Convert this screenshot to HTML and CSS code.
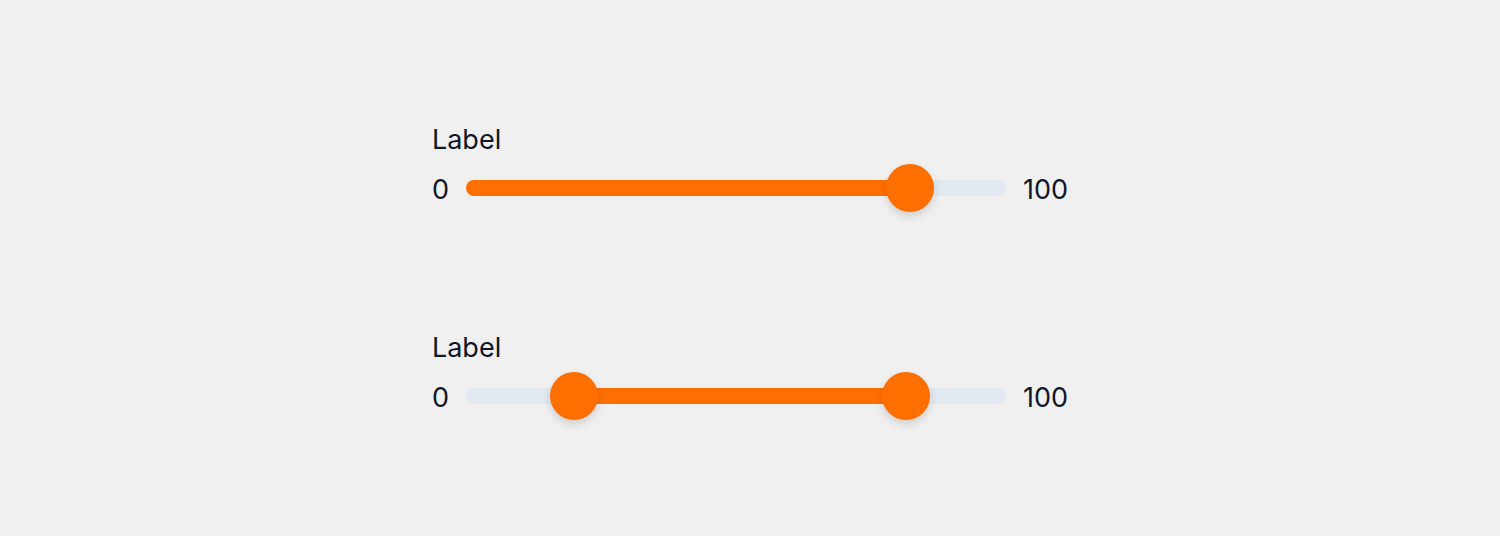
FILE: index.html
```html
<!DOCTYPE html>
<html lang="en">
<head>
<meta charset="utf-8">
<title>Range sliders</title>
<link rel="stylesheet" href="styles.css">
</head>
<body>
  <main class="stack">
    <div class="field">
      <div class="field-label">Label</div>
      <div class="slider-row">
        <span class="bound">0</span>
        <div class="track">
          <div class="fill" style="left:0%;width:82.3%"></div>
          <div class="thumb" style="left:82.3%"></div>
        </div>
        <span class="bound">100</span>
      </div>
    </div>

    <div class="field">
      <div class="field-label">Label</div>
      <div class="slider-row">
        <span class="bound">0</span>
        <div class="track">
          <div class="fill" style="left:20%;width:61.5%"></div>
          <div class="thumb" style="left:20%"></div>
          <div class="thumb" style="left:81.5%"></div>
        </div>
        <span class="bound">100</span>
      </div>
    </div>
  </main>
</body>
</html>
```

FILE: styles.css
```css
* {
  box-sizing: border-box;
}

html,
body {
  margin: 0;
  height: 100%;
}

body {
  background: #f0f0f0;
  font-family: Inter, "Liberation Sans", sans-serif;
  color: #0f172a;
}

.stack {
  display: flex;
  flex-direction: column;
  align-items: center;
  gap: 120px;
  padding-top: 124px;
}

.field {
  display: flex;
  flex-direction: column;
  gap: 8px;
}

.field-label {
  font-size: 27px;
  line-height: 32px;
  font-weight: 400;
}

.slider-row {
  display: flex;
  align-items: center;
  gap: 17px;
  height: 48px;
}

.bound {
  font-size: 27px;
  line-height: 32px;
  padding-top: 3px;
}

.track {
  position: relative;
  width: 540px;
  height: 16px;
  border-radius: 8px;
  background: #e2e8f0;
}

.fill {
  position: absolute;
  top: 0;
  bottom: 0;
  border-radius: 8px;
  background: #ff6f00;
}

.thumb {
  position: absolute;
  top: 50%;
  width: 48px;
  height: 48px;
  border-radius: 50%;
  background: #ff6f00;
  transform: translate(-50%, -50%);
  box-shadow: 0 4px 8px rgba(0, 0, 0, 0.14);
}
```
